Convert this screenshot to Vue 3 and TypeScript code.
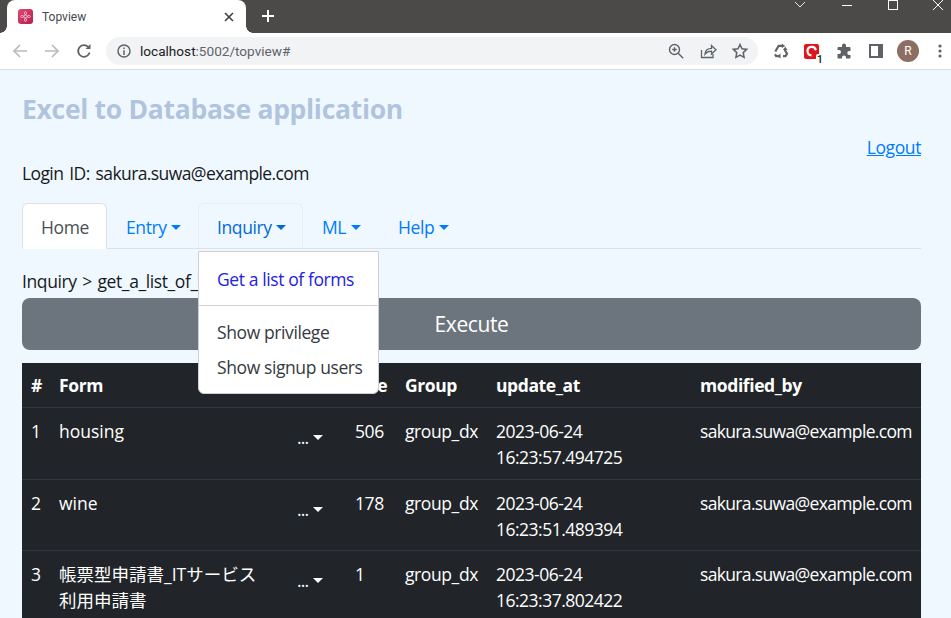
<script setup lang="ts">
interface FormRow {
  id: number;
  name: string;
  size: number;
  group: string;
  date: string;
  time: string;
  user: string;
}

const navItems = [
  { label: 'Entry' },
  { label: 'Inquiry', open: true },
  { label: 'ML' },
  { label: 'Help' },
];

const rows: FormRow[] = [
  { id: 1, name: 'housing', size: 506, group: 'group_dx', date: '2023-06-24', time: '16:23:57.494725', user: 'sakura.suwa@example.com' },
  { id: 2, name: 'wine', size: 178, group: 'group_dx', date: '2023-06-24', time: '16:23:51.489394', user: 'sakura.suwa@example.com' },
  { id: 3, name: '帳票型申請書_ITサービス\n利用申請書', size: 1, group: 'group_dx', date: '2023-06-24', time: '16:23:37.802422', user: 'sakura.suwa@example.com' },
];
</script>

<template>
  <div class="window">
    <div class="titlebar">
      <div class="tab">
        <span class="favicon">
          <svg width="11" height="11" viewBox="0 0 11 11" fill="none" stroke="#f6c9d6" stroke-width=".9">
            <circle cx="5.500" cy="5.500" r="1.500" />
            <path d="M5.500 4C4 2.500 4.200 1 5.500 .6 6.800 1 7 2.500 5.500 4zM5.500 7c-1.500 1.500-1.300 3 0 3.400C6.800 10 7 8.500 5.500 7zM4 5.500C2.500 4 1 4.200.6 5.500 1 6.800 2.500 7 4 5.500zM7 5.500c1.500-1.500 3-1.300 3.400 0C10 6.800 8.500 7 7 5.500z" />
          </svg>
        </span>
        <span class="tab-title">Topview</span>
        <svg class="tab-close" width="10" height="10" viewBox="0 0 10 10" stroke="#3c4043" stroke-width="1.6">
          <path d="M1 1l8 8M9 1l-8 8" />
        </svg>
      </div>
      <svg class="new-tab" width="12" height="12" viewBox="0 0 12 12" stroke="#fff" stroke-width="2">
        <path d="M6 0v12M0 6h12" />
      </svg>
      <div class="win-controls">
        <svg class="win-chevron" width="12" height="7" viewBox="0 0 12 7" fill="none" stroke="#e8e8e8" stroke-width="1">
          <path d="M1 1l5 5 5-5" />
        </svg>
        <svg class="win-min" width="10" height="1" viewBox="0 0 10 1"><rect width="10" height="1" fill="#fff" /></svg>
        <svg class="win-max" width="10" height="10" viewBox="0 0 10 10" fill="none" stroke="#fff"><rect x=".5" y=".5" width="9" height="9" /></svg>
        <svg class="win-close" width="10" height="10" viewBox="0 0 10 10" stroke="#fff"><path d="M0 0l10 10M10 0L0 10" /></svg>
      </div>
    </div>

    <div class="toolbar">
      <svg class="tb-icon" width="16" height="16" viewBox="0 0 16 16" fill="none" stroke="#b9bbbe" stroke-width="1.7">
        <path d="M15 8H2M8 2L2 8l6 6" />
      </svg>
      <svg class="tb-icon" width="16" height="16" viewBox="0 0 16 16" fill="none" stroke="#b9bbbe" stroke-width="1.7">
        <path d="M1 8h13M8 2l6 6-6 6" />
      </svg>
      <svg class="tb-icon" width="16" height="16" viewBox="0 0 16 16" fill="none" stroke="#5f6368" stroke-width="1.8">
        <path d="M13.600 9.500A5.800 5.800 0 1 1 12.200 4" />
        <path d="M14.500 1v5h-5z" fill="#5f6368" stroke="none" />
      </svg>
      <div class="omnibox">
        <svg width="16" height="16" viewBox="0 0 16 16" fill="none" stroke="#5f6368" stroke-width="1.5">
          <circle cx="8" cy="8" r="6" />
          <path d="M8 7.200V12M8 4.400v1.500" />
        </svg>
        <span class="url">localhost<span class="url-path">:5002/topview#</span></span>
        <span class="omni-right">
          <svg width="18" height="18" viewBox="0 0 18 18" fill="none" stroke="#5f6368" stroke-width="1.4">
            <circle cx="7.500" cy="7.500" r="5" />
            <path d="M11.200 11.200l5 5M5.200 7.500h4.600M7.500 5.200v4.600" />
          </svg>
          <svg width="18" height="18" viewBox="0 0 18 18" fill="none" stroke="#5f6368" stroke-width="1.300">
            <path d="M2.500 8v7.500h11.500V12" />
            <path d="M6 12c.4-3.600 3-5.600 6.500-5.600V3.500l4.500 4.300-4.500 4.200V9.200C9.800 9.200 7.600 10 6 12z" />
          </svg>
          <svg width="18" height="18" viewBox="0 0 18 18" fill="none" stroke="#5f6368" stroke-width="1.500">
            <path d="M9 2.500l2 4.300 4.700.6-3.500 3.200.9 4.700L9 13l-4.100 2.300.9-4.700-3.500-3.200 4.700-.6z" />
          </svg>
        </span>
      </div>
      <div class="extensions">
        <svg class="ext-recycle" width="16" height="16" viewBox="0 0 16 16" fill="none" stroke="#5f6368" stroke-width="2.200">
          <path d="M2.300 8.500L5.700 2.800H9" />
          <path d="M11 5.500l3 5.300-1.500 2.400H10" />
          <path d="M6.500 13.200H3.200L2 11.200" />
          <path d="M8.800.6l3.400 2.500-3.400 1.800zM14.600 7l-3.800-.2 1.300-3.400zM7.500 10.500v5L4.300 13z" fill="#5f6368" stroke="none" />
        </svg>
        <span class="ext-red">
          <svg width="15" height="15" viewBox="0 0 15 15" fill="none">
            <rect width="15" height="15" rx="2" fill="#e0161c" />
            <path d="M11.800 6.200A4.200 4.200 0 1 0 7.500 11.300" stroke="#fff" stroke-width="2.200" />
          </svg>
          <span class="ext-count">1</span>
        </span>
        <svg width="16" height="16" viewBox="0 0 16 16" fill="#5f6368">
          <path d="M6 2.500a2 2 0 0 1 4 0V4h3.500a1 1 0 0 1 1 1v3h-1.200a2 2 0 0 0 0 4h1.200v2.500a1 1 0 0 1-1 1H10v-1a2 2 0 0 0-4 0v1H2.500a1 1 0 0 1-1-1V11H3a2 2 0 0 0 0-4H1.500V5a1 1 0 0 1 1-1H6z" />
        </svg>
        <svg width="14" height="14" viewBox="0 0 14 14">
          <path fill="#5f6368" fill-rule="evenodd" d="M0 0h14v14H0zM2 2v10h7V2z" />
        </svg>
        <span class="avatar">R</span>
        <svg width="4" height="14" viewBox="0 0 4 14" fill="#5f6368">
          <circle cx="2" cy="2" r="1.600" /><circle cx="2" cy="7" r="1.600" /><circle cx="2" cy="12" r="1.600" />
        </svg>
      </div>
    </div>

    <main class="page">
      <h1 class="app-title">Excel to Database application</h1>
      <div class="logout-row"><a class="logout" href="#">Logout</a></div>
      <p class="login-id">Login ID: sakura.suwa@example.com</p>

      <nav class="nav-tabs">
        <a class="nav-link home" href="#">Home</a>
        <div v-for="item in navItems" :key="item.label" class="nav-item">
          <a class="nav-link" :class="{ open: item.open }" href="#">
            {{ item.label }}<span class="caret" />
          </a>
          <div v-if="item.open" class="menu">
            <a class="menu-item active" href="#">Get a list of forms</a>
            <hr class="menu-divider" />
            <a class="menu-item" href="#">Show privilege</a>
            <a class="menu-item" href="#">Show signup users</a>
          </div>
        </div>
      </nav>

      <p class="crumb">Inquiry &gt; get_a_list_of_forms</p>
      <button class="execute" type="button">Execute</button>

      <table class="forms">
        <colgroup>
          <col class="col-id" />
          <col class="col-form" />
          <col class="col-more" />
          <col class="col-size" />
          <col class="col-group" />
          <col class="col-date" />
          <col />
        </colgroup>
        <thead>
          <tr>
            <th>#</th>
            <th>Form</th>
            <th></th>
            <th>Size</th>
            <th>Group</th>
            <th>update_at</th>
            <th>modified_by</th>
          </tr>
        </thead>
        <tbody>
          <tr v-for="row in rows" :key="row.id">
            <td>{{ row.id }}</td>
            <td class="name">{{ row.name }}</td>
            <td><span class="more">...<span class="caret" /></span></td>
            <td>{{ row.size }}</td>
            <td>{{ row.group }}</td>
            <td class="stamp">{{ row.date }}<br />{{ row.time }}</td>
            <td class="user">{{ row.user }}</td>
          </tr>
        </tbody>
      </table>
    </main>
  </div>
</template>

<style>
html,
body {
  margin: 0;
  height: 100%;
  overflow: hidden;
}
</style>

<style scoped>
.window {
  width: 951px;
  height: 618px;
  overflow: hidden;
  display: flex;
  flex-direction: column;
  font-family: 'Open Sans', 'Noto Sans CJK JP', sans-serif;
}

.titlebar {
  height: 33px;
  flex-shrink: 0;
  background: #4b4a48;
  display: flex;
  align-items: flex-start;
  position: relative;
}

.tab {
  position: relative;
  width: 239px;
  height: 33px;
  margin-left: 7px;
  background: #fff;
  border-radius: 8px 8px 0 0;
  display: flex;
  align-items: center;
  padding: 0 12px 0 11px;
  box-sizing: border-box;
}

.tab::before,
.tab::after {
  content: '';
  position: absolute;
  bottom: 0;
  width: 7px;
  height: 7px;
}

.tab::before {
  left: -7px;
  background: radial-gradient(circle at 0 0, transparent 6.5px, #fff 7px);
}

.tab::after {
  right: -7px;
  background: radial-gradient(circle at 100% 0, transparent 6.5px, #fff 7px);
}

.favicon {
  width: 15px;
  height: 15px;
  border-radius: 3px;
  background: linear-gradient(135deg, #e0476f, #b81f4f);
  display: flex;
  align-items: center;
  justify-content: center;
}

.tab-title {
  margin-left: 9px;
  flex: 1;
  font-family: 'Roboto', sans-serif;
  font-size: 12px;
  color: #45494d;
}

.new-tab {
  margin: 10px 0 0 16px;
}

.win-chevron {
  position: absolute;
  right: 145px;
  top: 1px;
}

.win-min {
  position: absolute;
  right: 99px;
  top: 5px;
}

.win-max {
  position: absolute;
  right: 53px;
  top: 0;
}

.win-close {
  position: absolute;
  right: 8px;
  top: 0;
}

.toolbar {
  height: 37px;
  flex-shrink: 0;
  background: #fff;
  border-bottom: 1px solid #dadce0;
  display: flex;
  align-items: center;
  padding: 0 0 0 12px;
  box-sizing: border-box;
  overflow: hidden;
}

.tb-icon {
  flex-shrink: 0;
  margin-right: 16px;
}

.omnibox {
  flex-shrink: 0;
  width: 652px;
  height: 28px;
  margin-left: -2px;
  border-radius: 14px;
  background: #f1f3f4;
  display: flex;
  align-items: center;
  padding: 0 9px 0 10px;
  box-sizing: border-box;
}

.url {
  margin-left: 8px;
  font-family: 'Roboto', sans-serif;
  font-size: 13.6px;
  color: #202124;
}

.url-path {
  color: #5f6368;
}

.omni-right {
  margin-left: auto;
  display: flex;
  gap: 14px;
}

.extensions {
  flex-shrink: 0;
  margin-left: 6px;
  display: grid;
  grid-auto-flow: column;
  grid-auto-columns: 32px;
  justify-items: center;
  align-items: center;
}

.ext-recycle {
  margin-left: 2px;
}

.ext-red {
  position: relative;
  display: flex;
  margin-right: 1px;
}

.ext-count {
  position: absolute;
  right: -5px;
  bottom: -6px;
  padding: 0 1px;
  background: #fff;
  border-radius: 2px 0 0 0;
  font-family: 'Roboto', sans-serif;
  font-size: 11px;
  font-weight: 500;
  line-height: 11px;
  color: #202124;
}

.avatar {
  width: 22px;
  height: 22px;
  border-radius: 50%;
  background: #8d6e63;
  color: #fff;
  font-family: 'Roboto', sans-serif;
  font-size: 12px;
  display: flex;
  align-items: center;
  justify-content: center;
}

.page {
  flex: 1;
  background: #f0f8ff;
  padding: 0 30px 0 22px;
  font-size: 17.5px;
  line-height: 26.25px;
  color: #16191c;
  letter-spacing: -0.4px;
}

.app-title {
  margin: 0;
  padding-top: 21px;
  font-size: 26.5px;
  line-height: 36px;
  font-weight: 700;
  letter-spacing: -0.3px;
  color: #b0c4de;
}

.logout-row {
  display: flex;
  justify-content: flex-end;
  margin-top: 7px;
}

.logout {
  color: #007bff;
}

.login-id {
  margin: 0;
  letter-spacing: -0.6px;
  word-spacing: 2px;
}

.nav-tabs {
  display: grid;
  grid-template-columns: 85px 91px 105px 76px 1fr;
  margin-top: 16px;
  height: 45px;
  border-bottom: 1px solid #dee2e6;
}

.nav-item {
  position: relative;
}

.nav-link {
  display: block;
  height: 45px;
  box-sizing: border-box;
  padding: 10px 18px;
  border: 1px solid transparent;
  border-radius: 6px 6px 0 0;
  color: #007bff;
  text-decoration: none;
  white-space: nowrap;
}

.nav-link.home {
  height: 46px;
  background: #fff;
  border-color: #dee2e6 #dee2e6 #fff;
  color: #495057;
}

.nav-link.open {
  border-color: #e6edf3 #e6edf3 transparent;
  color: #0069d9;
}

.caret {
  display: inline-block;
  margin-left: 4.5px;
  vertical-align: 4px;
  border-top: 5.25px solid currentColor;
  border-left: 5.25px solid transparent;
  border-right: 5.25px solid transparent;
}

.menu {
  position: absolute;
  top: 48px;
  left: 0;
  z-index: 5;
  width: 181px;
  height: 143px;
  box-sizing: border-box;
  padding: 9px 0 10px;
  background: #fff;
  border: 1px solid #ccd0d5;
  border-radius: 0 0 6px 6px;
}

.menu-item {
  display: block;
  padding: 5px 18px 4px;
  color: #343a40;
  text-decoration: none;
  white-space: nowrap;
}

.menu-item.active {
  color: #2222e0;
}

.menu-divider {
  margin: 9px 0 8px;
  border: 0;
  border-top: 1px solid #d0d3d7;
}

.crumb {
  margin: 19px 0 4px;
  word-spacing: 1.5px;
}

.execute {
  display: block;
  width: 100%;
  height: 52px;
  border: 0;
  border-radius: 8px;
  background: #6c757d;
  color: #fff;
  font: inherit;
  font-size: 21px;
  letter-spacing: -0.4px;
}

.forms {
  width: 899px;
  margin-top: 13px;
  table-layout: fixed;
  border-collapse: collapse;
  background: #212529;
  color: #fff;
}

.col-id {
  width: 28px;
}

.col-form {
  width: 238px;
}

.col-more {
  width: 58px;
}

.col-size {
  width: 50px;
}

.col-group {
  width: 91px;
}

.col-date {
  width: 204px;
}

.forms th,
.forms td {
  padding: 10px 9px 8px;
  text-align: left;
  vertical-align: top;
  border-top: 1px solid #32383e;
}

.forms th {
  padding: 9px;
  border-top: 0;
  font-weight: 700;
}

.name {
  white-space: pre-line;
  letter-spacing: 0;
}

.stamp {
  letter-spacing: -0.5px;
}

.user {
  white-space: nowrap;
  letter-spacing: -0.66px;
}

.more {
  display: inline-block;
  margin-top: 6px;
  white-space: nowrap;
  letter-spacing: -0.8px;
}
</style>
